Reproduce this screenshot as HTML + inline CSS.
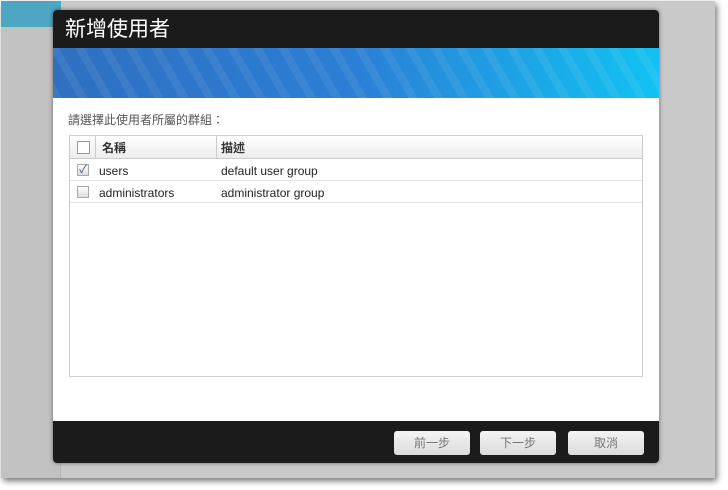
<!DOCTYPE html>
<html><head><meta charset="utf-8"><style>
*{margin:0;padding:0;box-sizing:border-box}
body{width:728px;height:490px;background:#fff;position:relative;overflow:hidden;font-family:"Liberation Sans","Noto Sans CJK TC",sans-serif}
.win{position:absolute;left:1px;top:1px;width:714px;height:477px;background:#c9c9c9;box-shadow:2px 3px 6px rgba(0,0,0,.55)}
.side{position:absolute;left:0;top:0;width:60px;height:477px;background:#c2c2c2;border-right:1px solid #b5b5b5}
.tab{position:absolute;left:0;top:0;width:60px;height:26px;background:#4fa6c4}
.dlg{position:absolute;left:53px;top:10px;width:606px;height:453px;background:#fff;border-radius:4px;overflow:hidden;box-shadow:0 0 4px rgba(0,0,0,.5)}
.hd{height:38px;background:#1b1b1b;color:#fff;font-size:21px;padding:8px 0 0 12px;line-height:24px}
.bn{height:50px;background:repeating-linear-gradient(60deg,rgba(255,255,255,.07) 0 8px,rgba(255,255,255,0) 8px 22px),linear-gradient(90deg,#2f6fc0,#2b7fd5 50%,#12c2f2)}
.lbl{position:absolute;left:15px;top:101px;font-size:12px;color:#555}
.tb{position:absolute;left:16px;top:125px;width:574px;height:242px;border:1px solid #ccc}
.th{height:23px;background:linear-gradient(#fff,#ececec);border-bottom:1px solid #ccc;position:relative;font-size:12px;font-weight:bold;color:#333}
.th .c1,.th .c2{top:3px}
.row{height:22px;border-bottom:1px solid #e4e4e4;position:relative;font-size:12px;color:#222}
.c1{position:absolute;left:29px;top:5px}.c2{position:absolute;left:151px;top:5px}
.vl{position:absolute;top:0;height:23px;border-left:1px solid #ccc}
.cb{position:absolute;left:7px;top:5px;width:13px;height:13px;border:1px solid #999;background:#fff}
.rc{position:absolute;left:7px;top:5px;width:12px;height:12px;border:1px solid #aaa;background:linear-gradient(#fff,#ddd);font-size:11px;line-height:10px;color:#3348a0;text-align:center}
.ft{position:absolute;left:0;top:411px;width:606px;height:42px;background:#1b1b1b}
.bt{position:absolute;top:10px;width:76px;height:24px;border-radius:3px;background:linear-gradient(#f4f4f4,#dcdcdc);color:#777;font-size:12px;text-align:center;line-height:24px}
</style></head><body>
<div class="win"><div class="side"><div class="tab"></div></div></div>
<div class="dlg">
<div class="hd">新增使用者</div>
<div class="bn"></div>
<div class="lbl">請選擇此使用者所屬的群組：</div>
<div class="tb">
<div class="th"><div class="cb"></div><div class="vl" style="left:25px"></div><div class="c1" style="left:32px">名稱</div><div class="vl" style="left:146px"></div><div class="c2">描述</div></div>
<div class="row"><div class="rc">✓</div><div class="c1">users</div><div class="c2">default user group</div></div>
<div class="row"><div class="rc"></div><div class="c1">administrators</div><div class="c2">administrator group</div></div>
</div>
<div class="ft"><div class="bt" style="left:341px">前一步</div><div class="bt" style="left:427px">下一步</div><div class="bt" style="left:515px">取消</div></div>
</div>
</body></html>
